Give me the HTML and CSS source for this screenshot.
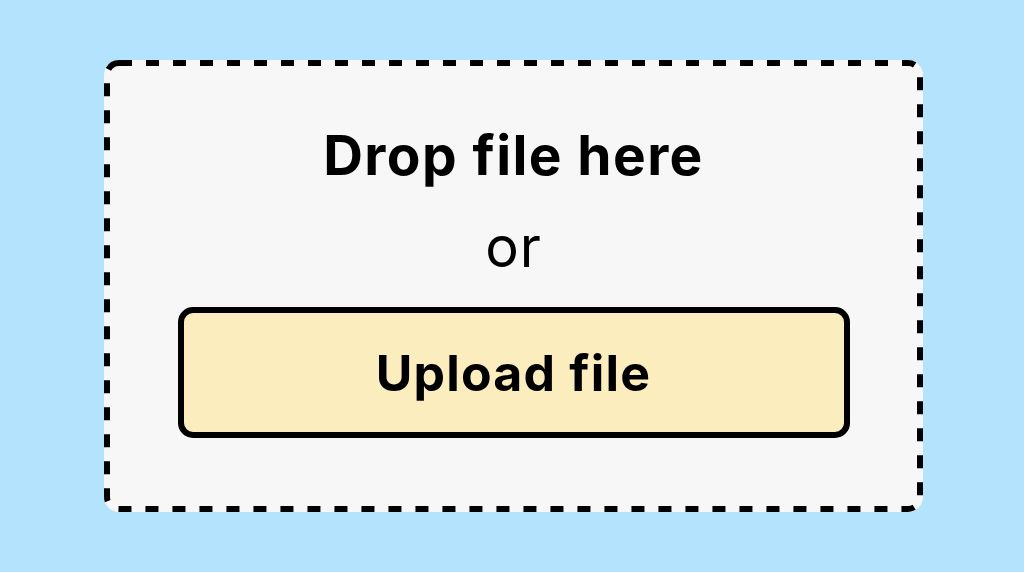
FILE: index.html
```html
<!DOCTYPE html>
<html lang="en">
<head>
    <meta charset="UTF-8">
    <meta name="viewport" content="width=device-width, initial-scale=1.0">
    <title>File Upload</title>
    <link rel="stylesheet" href="styles.css">
</head>
<body>
    <div class="dropzone">
        <!-- dashed outline drawn in svg so the dash length can be set -->
        <svg class="dash-border" width="819" height="452" viewBox="0 0 819 452">
            <rect x="3" y="3" width="813" height="446" rx="12" ry="12"
                  fill="none" stroke="#000" stroke-width="6" stroke-dasharray="13 14"/>
        </svg>
        <h1 class="title">Drop file here</h1>
        <p class="or">or</p>
        <button class="upload-btn">Upload file</button>
    </div>
</body>
</html>
```

FILE: styles.css
```css
body {
    margin: 0;
    height: 572px;
    padding: 60px 0 0 104px;
    box-sizing: border-box;
    background: #b3e3fd;
    font-family: 'Inter', sans-serif;
    color: #000;
}

.dropzone {
    position: relative;
    width: 819px;
    height: 452px;
    background: #f7f7f7;
    border-radius: 15px;
    display: flex;
    flex-direction: column;
    align-items: center;
}

.dash-border {
    position: absolute;
    left: 0;
    top: 0;
}

.title {
    margin: 65px 0 0;
    font-size: 55px;
    line-height: 60px;
    font-weight: 700;
    letter-spacing: 1.4px;
}

.or {
    margin: 32px 0 0;
    font-size: 56px;
    line-height: 60px;
    font-weight: 400;
    letter-spacing: 1px;
}

.upload-btn {
    margin-top: 30px;
    width: 672px;
    height: 131px;
    background: #fcedbf;
    border: 6px solid #000;
    border-radius: 15px;
    font-family: 'Inter', sans-serif;
    font-size: 50px;
    font-weight: 700;
    letter-spacing: 1.2px;
    color: #000;
    cursor: pointer;
}
```
